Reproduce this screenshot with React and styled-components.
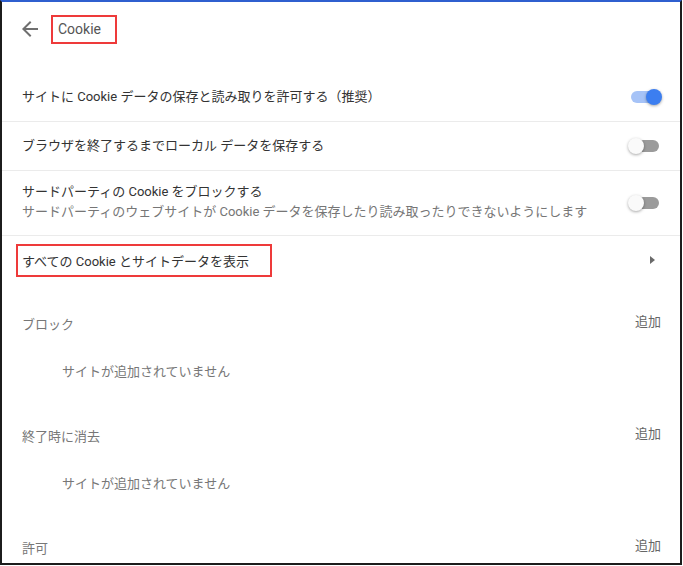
import React from 'react'
import styled, { createGlobalStyle } from 'styled-components'

const Global = createGlobalStyle`
  html, body { margin: 0; padding: 0; background: #fff; }
  body { font-family: Roboto, "Noto Sans CJK JP", sans-serif; }
`

const sections = [
  { id: 1, label: 'ブロック', empty: true },
  { id: 2, label: '終了時に消去', empty: true },
  { id: 3, label: '許可', empty: false },
]

const App = () => {
  return (
    <>
      <Global />
      <Frame>
        <Header>
          <BackIcon viewBox="0 0 24 24">
            <path d="M20 11H7.83l5.59-5.59L12 4l-8 8 8 8 1.41-1.41L7.83 13H20v-2z" />
          </BackIcon>
          <TitleBox>Cookie</TitleBox>
        </Header>
        <List>
          <Row>
            <Texts>
              <Title>サイトに Cookie データの保存と読み取りを許可する（推奨）</Title>
            </Texts>
            <Toggle on />
          </Row>
          <Row divider>
            <Texts>
              <Title>ブラウザを終了するまでローカル データを保存する</Title>
            </Texts>
            <Toggle />
          </Row>
          <Row divider tall>
            <Texts two>
              <Title>サードパーティの Cookie をブロックする</Title>
              <Sub>サードパーティのウェブサイトが Cookie データを保存したり読み取ったりできないようにします</Sub>
            </Texts>
            <Toggle />
          </Row>
          <Row divider>
            <LinkBox>すべての Cookie とサイトデータを表示</LinkBox>
            <ArrowWrap><Triangle /></ArrowWrap>
          </Row>
        </List>
        {sections.map((s) => (
          <Section key={s.id}>
            <SectionHead>
              <SectionLabel>{s.label}</SectionLabel>
              <AddButton>追加</AddButton>
            </SectionHead>
            {s.empty && <Empty>サイトが追加されていません</Empty>}
          </Section>
        ))}
      </Frame>
    </>
  )
}

export default App

const Toggle = ({ on }) => (
  <ToggleWrap>
    <Track on={on ? 1 : 0} />
    <Knob on={on ? 1 : 0} />
  </ToggleWrap>
)

const Frame = styled.div`
  width: 682px;
  height: 565px;
  box-sizing: border-box;
  border-top: 2px solid #2f5fcf;
  border-left: 2px solid #1c1c1c;
  border-right: 2px solid #1c1c1c;
  border-bottom: 2px solid #1c1c1c;
  box-shadow: 0 1px 0 #a8a8a8;
  overflow: hidden;
  background: #fff;
`
const Header = styled.div`
  height: 54px;
  display: flex;
  align-items: center;
  padding-left: 16px;
  gap: 9px;
`
const BackIcon = styled.svg`
  width: 24px;
  height: 24px;
  fill: #6f6f6f;
`
const TitleBox = styled.div`
  width: 66px;
  height: 29px;
  box-sizing: border-box;
  border: 2px solid #ee3a3a;
  display: flex;
  align-items: center;
  padding-left: 5px;
  font-size: 14px;
  color: #555;
`
const List = styled.div`
  margin-top: 17px;
`
const Row = styled.div`
  display: flex;
  align-items: center;
  justify-content: space-between;
  min-height: ${(p) => (p.tall ? 64 : 48)}px;
  padding: 0 18px 0 20px;
  border-top: ${(p) => (p.divider ? '1px solid #ebebeb' : 'none')};
`
const Texts = styled.div`
  display: flex;
  flex-direction: column;
  margin-bottom: ${(p) => (p.two ? 2 : 0)}px;
`
const Title = styled.div`
  font-size: 13px;
  line-height: 20px;
  color: #333;
`
const Sub = styled.div`
  font-size: 13px;
  line-height: 20px;
  color: #767676;
`
const ToggleWrap = styled.div`
  position: relative;
  width: 34px;
  height: 16px;
  flex-shrink: 0;
`
const Track = styled.div`
  position: absolute;
  left: 3px;
  top: 2px;
  width: 28px;
  height: 12px;
  border-radius: 6px;
  background: ${(p) => (p.on ? '#a6c3f7' : '#9b9b9b')};
`
const Knob = styled.div`
  position: absolute;
  top: 0;
  left: ${(p) => (p.on ? 18 : 0)}px;
  width: 16px;
  height: 16px;
  border-radius: 50%;
  background: ${(p) => (p.on ? '#3c7ef0' : '#fafafa')};
  box-shadow: 0 1px 3px rgba(0, 0, 0, 0.35);
`
const LinkBox = styled.div`
  width: 256px;
  height: 33px;
  box-sizing: border-box;
  margin-left: -6px;
  border: 2px solid #ee3a3a;
  display: flex;
  align-items: center;
  padding-left: 4px;
  font-size: 13px;
  color: #333;
`
const ArrowWrap = styled.div`
  width: 20px;
  display: flex;
  justify-content: center;
`
const Triangle = styled.div`
  width: 0;
  height: 0;
  border-left: 5px solid #6a6a6a;
  border-top: 4px solid transparent;
  border-bottom: 4px solid transparent;
`
const Section = styled.div`
  padding: 23px 18px 10px 20px;
`
const SectionHead = styled.div`
  height: 32px;
  display: flex;
  align-items: center;
  justify-content: space-between;
`
const SectionLabel = styled.div`
  font-size: 13px;
  color: #777;
`
const AddButton = styled.div`
  font-size: 13px;
  color: #666;
  margin-bottom: 6px;
  padding-right: 1px;
`
const Empty = styled.div`
  height: 32px;
  margin-top: 15px;
  display: flex;
  align-items: center;
  padding-left: 40px;
  font-size: 13px;
  color: #777;
`
